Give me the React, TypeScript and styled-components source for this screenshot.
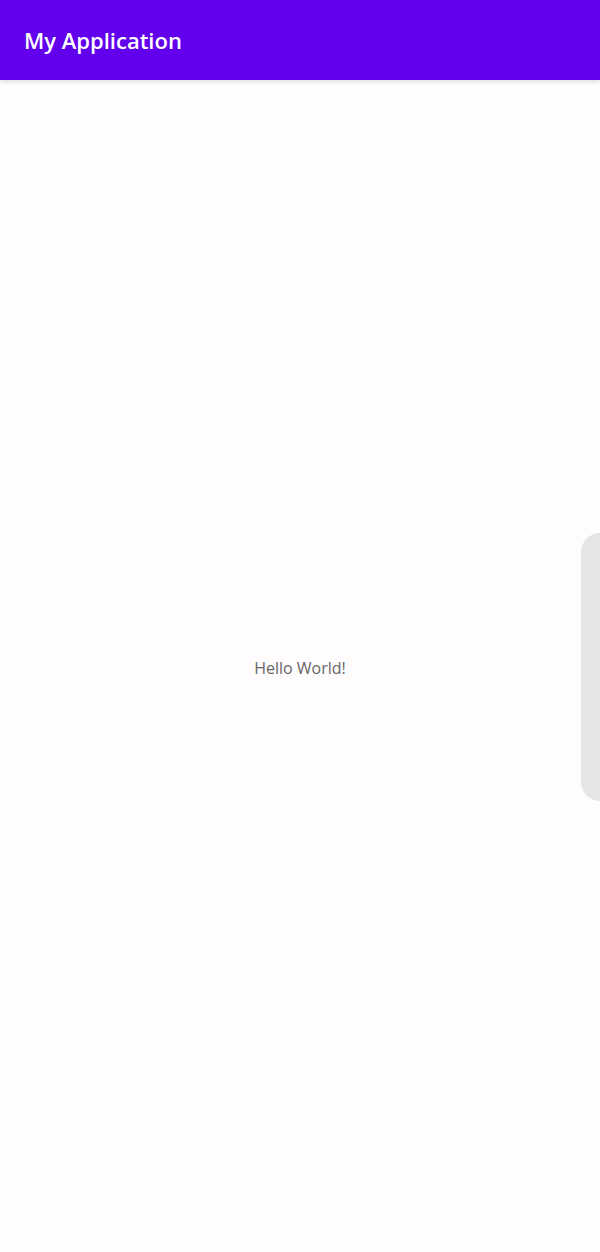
import React from 'react';
import styled, { createGlobalStyle } from 'styled-components';

const GlobalStyle = createGlobalStyle`
  html, body {
    margin: 0;
    padding: 0;
    background: #fffcfe;
    font-family: "Open Sans", "Noto Sans", sans-serif;
  }
  #root {
    height: 1252px;
  }
`;

const Screen = styled.div`
  position: relative;
  height: 1252px;
  display: flex;
  flex-direction: column;
  background: #fffcfe;
  overflow: hidden;
`;

const Toolbar = styled.header`
  height: 80px;
  flex-shrink: 0;
  background: #6200ee;
  display: flex;
  align-items: center;
  padding: 0 24px;
  box-shadow: 0 2px 4px rgba(0, 0, 0, 0.12);
  z-index: 1;

  h1 {
    margin: 0;
    color: #ffffff;
    font-size: 22px;
    font-weight: 600;
    letter-spacing: 0;
  }
`;

const Content = styled.main`
  flex: 1;
  display: flex;
  align-items: center;
  justify-content: center;
  padding-top: 4px;
`;

const Greeting = styled.p`
  margin: 0;
  color: #666666;
  font-size: 16px;
`;

const EdgeHandle = styled.div`
  position: absolute;
  right: 0;
  top: 533px;
  width: 19px;
  height: 268px;
  background: #e6e5e6;
  border-radius: 20px 0 0 20px;
`;

export default function App() {
  return (
    <>
      <GlobalStyle />
      <Screen>
        <Toolbar>
          <h1>My Application</h1>
        </Toolbar>
        <Content>
          <Greeting>Hello World!</Greeting>
        </Content>
        <EdgeHandle />
      </Screen>
    </>
  );
}
